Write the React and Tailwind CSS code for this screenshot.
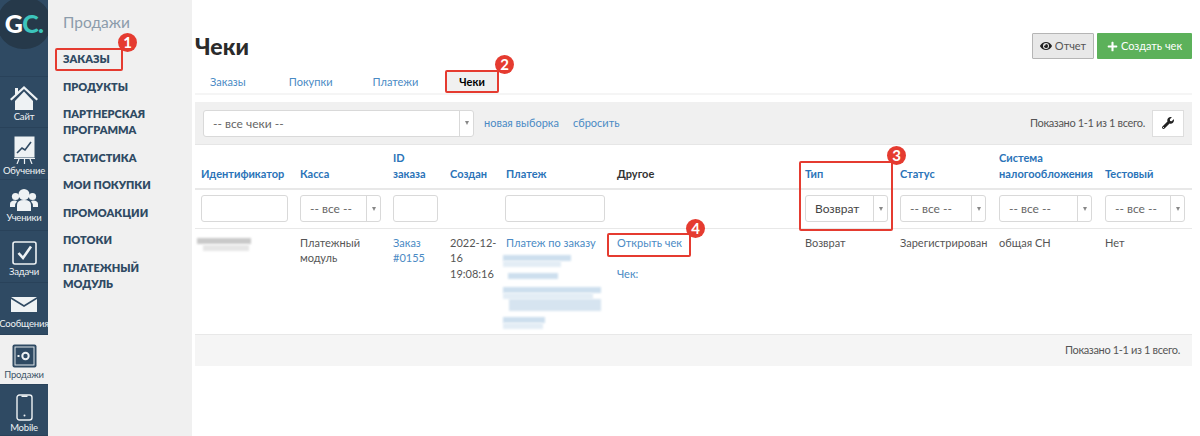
import { FaEye, FaPlus, FaWrench } from "react-icons/fa";

function HouseIcon() {
  return (
    <svg width="28" height="24" viewBox="0 0 28 24" fill="#eef2f4">
      <path d="M14 0 L28 13 L26.5 14.5 L14 3 L1.500 14.5 L0 13 L5 8.500 V2 H8 V5.500 Z" />
      <path d="M5 15 L14 5.500 L23 15 V24 H5 Z" />
    </svg>
  );
}

function BoardIcon() {
  return (
    <svg width="21" height="28" viewBox="0 0 21 28">
      <rect x="0.500" y="0.500" width="20" height="21" fill="#eef2f4" />
      <path d="M3 17 L8 12 L11 14 L17 6" stroke="#2f4a63" strokeWidth="1.6" fill="none" />
      <path d="M0 22.500 H21 M5 23 L3 28 M10.500 23 V28 M16 23 L18 28" stroke="#eef2f4" strokeWidth="1.2" fill="none" />
    </svg>
  );
}

function PeopleIcon() {
  return (
    <svg width="28" height="22" viewBox="0 0 28 22" fill="#eef2f4">
      <circle cx="14" cy="5.500" r="5.500" />
      <circle cx="5.500" cy="7.500" r="3.600" />
      <circle cx="22.500" cy="7.500" r="3.600" />
      <path d="M7 22 V16 Q7 11 14 11 Q21 11 21 16 V22 Z" />
      <path d="M0 18 V15 Q0 11.500 5 11.500 Q6.500 11.500 7 12.500 Q5 14 5 18 Z" />
      <path d="M28 18 V15 Q28 11.500 23 11.500 Q21.500 11.500 21 12.500 Q23 14 23 18 Z" />
    </svg>
  );
}

function CheckIcon() {
  return (
    <svg width="25" height="24" viewBox="0 0 25 24">
      <rect x="1" y="1" width="23" height="22" rx="2" fill="none" stroke="#eef2f4" strokeWidth="1.600" />
      <path d="M6.500 12 L11 17 L19 5.500" fill="none" stroke="#eef2f4" strokeWidth="2.600" />
    </svg>
  );
}

function MailIcon() {
  return (
    <svg width="26" height="15" viewBox="0 0 26 15" fill="#eef2f4">
      <path d="M0 0 H26 L13 8 Z" />
      <path d="M0 2 L13 10 L26 2 V15 H0 Z" />
    </svg>
  );
}

function SafeIcon() {
  return (
    <svg width="25" height="24" viewBox="0 0 25 24">
      <rect x="0.500" y="0.500" width="24" height="23" rx="2" fill="#2f4a63" />
      <rect x="3" y="3" width="19" height="18" fill="none" stroke="#dfe5ea" strokeWidth="1" />
      <circle cx="13.500" cy="12" r="3.200" fill="none" stroke="#eef2f4" strokeWidth="2" />
      <rect x="5.500" y="11" width="2" height="2" fill="#eef2f4" />
    </svg>
  );
}

function PhoneIcon() {
  return (
    <svg width="17" height="27" viewBox="0 0 17 27">
      <rect x="1" y="1" width="15" height="25" rx="2.500" fill="none" stroke="#eef2f4" strokeWidth="1.400" />
      <rect x="5.500" y="1.500" width="6" height="1.500" fill="#eef2f4" />
      <circle cx="8.500" cy="21.500" r="1" fill="#eef2f4" />
    </svg>
  );
}

function RailItem({ icon, label, size, active }) {
  return (
    <div
      className={
        "flex flex-col items-center justify-end border-b border-[#29425a] " +
        size +
        (active ? " bg-[#f0f0f0] text-[#3d5468]" : " text-[#eef2f4]")
      }
    >
      {icon}
      <span className="text-[9.5px] leading-[13px] tracking-[-0.2px] whitespace-nowrap">{label}</span>
    </div>
  );
}

function Rail() {
  return (
    <div className="w-12 shrink-0 bg-[#2f4a63] overflow-hidden">
      <div className="h-[50px] relative overflow-hidden">
        <div className="absolute -left-[3px] -top-[3px] w-[54px] h-[52px] rounded-full bg-[#26394a] flex items-center justify-center">
          <span className="text-[25px] font-black leading-none tracking-tight text-white">
            G<span className="text-[#3cc4bc]">C.</span>
          </span>
        </div>
      </div>
      <div className="h-[27px] border-b border-[#29425a]" />
      <RailItem icon={<HouseIcon />} label="Сайт" size="h-[51px] pb-[4px]" />
      <RailItem icon={<BoardIcon />} label="Обучение" size="h-[52px] pb-[2px]" />
      <RailItem icon={<PeopleIcon />} label="Ученики" size="h-[51px] pb-[6px]" />
      <RailItem icon={<CheckIcon />} label="Задачи" size="h-[52px] pb-[4px]" />
      <RailItem icon={<div className="pb-[5px]"><MailIcon /></div>} label="Сообщения" size="h-[52px] pb-[4px]" />
      <RailItem icon={<SafeIcon />} label="Продажи" size="h-[50px] pb-[3px]" active />
      <RailItem icon={<PhoneIcon />} label="Mobile" size="h-[51px] pb-[1px]" />
    </div>
  );
}

function SideNav() {
  const items = ["Заказы", "Продукты", "Партнерская программа", "Статистика", "Мои покупки", "Промоакции", "Потоки", "Платежный модуль"];
  return (
    <div className="w-36 shrink-0 bg-[#f0f0f0] pl-[15px] pr-3 pt-[12px]">
      <div className="text-[15.5px] leading-[20px] text-[#8c9cab] mb-[19px]">Продажи</div>
      <div className="flex flex-col gap-[11.5px]">
        {items.map((item) => (
          <div key={item} className="text-[11px] leading-[16px] font-extrabold uppercase text-[#2f4a63]">
            {item}
          </div>
        ))}
      </div>
    </div>
  );
}

function SelectBox({ label, dark }) {
  return (
    <div className="h-[27px] flex bg-white border border-[#d9d9d9] rounded-[3px]">
      <div className={"flex-1 pl-[9px] text-[12px] leading-[25px] whitespace-nowrap " + (dark ? "text-[#444444]" : "text-[#666666]")}>
        {label}
      </div>
      <div className="w-[14px] border-l border-[#d9d9d9] flex items-center justify-center">
        <span className="w-0 h-0 border-x-[2.5px] border-x-transparent border-t-[4px] border-t-[#888888]" />
      </div>
    </div>
  );
}

function TextBox() {
  return <div className="h-[27px] bg-white border border-[#d9d9d9] rounded-[3px]" />;
}

function Smudge({ size, color = "bg-[#cddfee]" }) {
  return <div className={"blur-[1px] " + size + " " + color} />;
}

function Marker({ box, dot, n }) {
  return (
    <>
      {box && <div className={"absolute border-2 border-[#e53b30] rounded-[2px] " + box} />}
      <div className={"absolute w-[19px] h-[19px] rounded-full bg-[#e53b30] text-white text-[15px] font-bold leading-[19px] text-center " + dot}>
        {n}
      </div>
    </>
  );
}

const columns = [
  { title: "Идентификатор", width: "w-[99px]" },
  { title: "Касса", width: "w-[93px]" },
  { title: <>ID<br />заказа</>, key: "id", width: "w-[57px]" },
  { title: "Создан", width: "w-[56px]" },
  { title: "Платеж", width: "w-[111px]" },
  { title: "Другое", width: "w-[188px]", plain: true },
  { title: "Тип", width: "w-[95px]" },
  { title: "Статус", width: "w-[99px]" },
  { title: "Система налогообложения", width: "w-[106px]" },
  { title: "Тестовый", width: "w-[93px]" },
];

function ReceiptsTable() {
  return (
    <table className="table-fixed w-[997px] border-collapse text-[11px] leading-[15.5px] text-[#555555]">
      <colgroup>
        {columns.map((c) => (
          <col key={c.key || c.title} className={c.width} />
        ))}
      </colgroup>
      <thead>
        <tr className="h-[44px] border-b-2 border-[#e8e8e8]">
          {columns.map((c) => (
            <th
              key={c.key || c.title}
              className={"pl-[6px] pr-0 align-bottom pb-[7px] text-left font-bold " + (c.plain ? "text-[#333333]" : "text-[#2a73b8]")}
            >
              {c.title}
            </th>
          ))}
        </tr>
        <tr className="h-[39px] border-b border-[#e8e8e8]">
          <td className="pl-[6px] pr-[6px]"><TextBox /></td>
          <td className="pl-[6px] pr-[6px]"><SelectBox label="-- все --" /></td>
          <td className="pl-[6px] pr-[6px]"><TextBox /></td>
          <td />
          <td className="pl-[5px] pr-[6px]"><TextBox /></td>
          <td />
          <td className="pl-[6px] pr-[6px]"><SelectBox label="Возврат" dark /></td>
          <td className="pl-[6px] pr-[7px]"><SelectBox label="-- все --" /></td>
          <td className="pl-[6px] pr-[7px]"><SelectBox label="-- все --" /></td>
          <td className="pl-[6px] pr-[7px]"><SelectBox label="-- все --" /></td>
        </tr>
      </thead>
      <tbody>
        <tr className="h-[106px] border-b border-[#e8e8e8] align-top">
          <td className="pl-[2px] pt-[9px]">
            <div className="flex flex-col gap-[1px]">
              <Smudge size="w-[54px] h-[6px]" color="bg-[#c9c9c9]" />
              <Smudge size="w-[46px] h-[6px] ml-[6px]" color="bg-[#e6e6e6]" />
            </div>
          </td>
          <td className="pl-[6px] pt-[6px]">Платежный<br />модуль</td>
          <td className="pl-[6px] pt-[6px] text-[#4a8ac4]">Заказ<br />#0155</td>
          <td className="pl-[6px] pt-[6px]">2022-12-<br />16<br />19:08:16</td>
          <td className="pl-[6px] pt-[6px]">
            <div className="text-[#4a8ac4] whitespace-nowrap">Платеж по заказу</div>
            <div className="-ml-[3px] mt-[4.5px] flex flex-col">
              <Smudge size="w-[68px] h-[6px]" />
              <Smudge size="w-[58px] h-[6px]" color="bg-[#e3edf5]" />
              <div className="h-[6px]" />
              <Smudge size="w-[50px] h-[6px] ml-[5px]" />
              <div className="h-[8px]" />
              <Smudge size="w-[98px] h-[6px]" />
              <Smudge size="w-[90px] h-[6px]" color="bg-[#e3edf5]" />
              <Smudge size="w-[92px] h-[12px] ml-[6px]" color="bg-[#d6e4f0]" />
              <div className="h-[6px]" />
              <Smudge size="w-[42px] h-[6px]" />
              <Smudge size="w-[40px] h-[6px]" color="bg-[#e3edf5]" />
            </div>
          </td>
          <td className="pl-[6px] pt-[6px] text-[#4a8ac4]">
            Открыть чек
            <div className="mt-[15.5px]">Чек:</div>
          </td>
          <td className="pl-[6px] pt-[6px]">Возврат</td>
          <td className="pl-[6px] pt-[6px] whitespace-nowrap">Зарегистрирован</td>
          <td className="pl-[6px] pt-[6px]">общая СН</td>
          <td className="pl-[6px] pt-[6px]">Нет</td>
        </tr>
      </tbody>
    </table>
  );
}

export default function App() {
  return (
    <div className="relative flex h-[436px] w-[1200px] overflow-hidden bg-white font-['Lato',sans-serif]">
      <Rail />
      <SideNav />
      <div className="w-[997px] ml-[3px] shrink-0 flex flex-col">
        <div className="h-[65px] pt-[33px] flex justify-between">
          <h1 className="text-[23px] leading-[26px] font-black text-[#2b2b2b]">Чеки</h1>
          <div className="flex gap-[3px] h-[26px] text-[11px]">
            <div className="w-[62px] flex items-center justify-center gap-[3px] bg-[#e8e8e8] border border-[#b5b5b5] rounded-[1px] text-[#555555]">
              <FaEye className="text-[#222222] text-[12px]" />
              Отчет
            </div>
            <div className="w-[95px] flex items-center justify-center gap-[3px] bg-[#5cb15a] text-white rounded-[1px]">
              <FaPlus className="text-[11px]" />
              Создать чек
            </div>
          </div>
        </div>
        <div className="h-[30px] pt-[6px] pl-[15px] flex gap-[43px] border-b-2 border-[#f5f5f5] text-[11px] text-[#4a8ac4]">
          <span className="leading-[22px]">Заказы</span>
          <span className="leading-[22px]">Покупки</span>
          <span className="-ml-[3px] leading-[22px]">Платежи</span>
          <span className="-ml-[15px] px-[13px] h-[22px] leading-[22px] bg-[#f0f0f0] font-bold text-black">Чеки</span>
        </div>
        <div className="mt-[7px] h-[43px] bg-[#f0f0f0] border-b border-[#e6e6e6] pl-[8px] pr-[8px] flex items-center text-[11px]">
          <div className="w-[271px]"><SelectBox label="-- все чеки --" /></div>
          <span className="ml-[10px] text-[#4a8ac4]">новая выборка</span>
          <span className="ml-[14px] text-[#4a8ac4]">сбросить</span>
          <span className="ml-auto text-[#555555] tracking-[-0.35px]">Показано 1-1 из 1 всего.</span>
          <div className="ml-[7px] w-[32px] h-[27px] bg-white border border-[#dddddd] flex items-center justify-center">
            <FaWrench className="text-[12px] text-[#222222]" />
          </div>
        </div>
        <ReceiptsTable />
        <div className="h-[31px] bg-[#f5f5f5] flex items-center justify-end pr-[12px] text-[11px] text-[#555555] tracking-[-0.35px]">
          Показано 1-1 из 1 всего.
        </div>
      </div>

      <Marker box="left-[55px] top-[48px] w-[68px] h-[23px]" dot="left-[118px] top-[33px]" n="1" />
      <Marker box="left-[445px] top-[70px] w-[54px] h-[23px]" dot="left-[495px] top-[55px]" n="2" />
      <Marker box="left-[799px] top-[161px] w-[94px] h-[70px]" dot="left-[887px] top-[146px]" n="3" />
      <Marker box="left-[607px] top-[233px] w-[84px] h-[24px]" dot="left-[686px] top-[219px]" n="4" />
    </div>
  );
}
